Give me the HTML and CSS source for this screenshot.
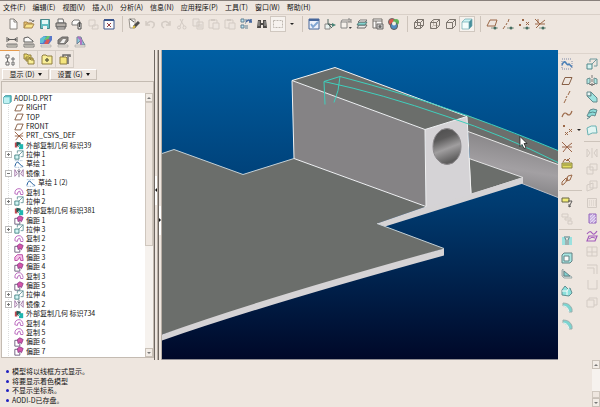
FILE: index.html
```
<!DOCTYPE html>
<html lang="zh-CN">
<head>
  <meta charset="UTF-8">
  <meta name="viewport" content="width=device-width, initial-scale=1.0">
  <title>AODI-D.PRT</title>
  <link rel="stylesheet" href="styles.css">
</head>
<body>

  <!-- Icon set -->
  <svg class="icon-set" aria-hidden="true">
    <symbol id="i-new" viewBox="0 0 12 12"><path d="M3 1h4l3 3v7H3z" fill="#fff" stroke="#77726d"/><path d="M7 1v3h3" fill="none" stroke="#77726d"/></symbol>
    <symbol id="i-open" viewBox="0 0 12 12"><path d="M1 10V4h3l1 1h4v2" fill="#e9bc58" stroke="#9a7430"/><path d="M1 10l2-4h8l-2 4z" fill="#fbe47c" stroke="#9a7430"/><path d="M6 2q3-1 4 2l1-2" fill="none" stroke="#555"/></symbol>
    <symbol id="i-save" viewBox="0 0 12 12"><path d="M1.500 1.500h9v9h-9z" fill="#4cb8bc" stroke="#2e767a"/><path d="M3 2h6v4H3z" fill="#e4fbfa"/><path d="M4 8h4v3H4z" fill="#f5f5f5"/></symbol>
    <symbol id="i-print" viewBox="0 0 12 12"><path d="M3 1h5l1 4H3z" fill="#fff" stroke="#555"/><path d="M1 5h10v4H1z" fill="#aaa59f" stroke="#444"/><path d="M2 9h8v2H2z" fill="#ded9d4" stroke="#555"/></symbol>
    <symbol id="i-mail" viewBox="0 0 12 12"><path d="M1 4l2-2h5l1 2v3H1z" fill="#fff" stroke="#666"/><path d="M7 5h3v6H7z" fill="#eee" stroke="#333"/><path d="M8.500 4v5" stroke="#333"/></symbol>
    <symbol id="i-erase" viewBox="0 0 12 12"><path d="M2 2h6v6H2zM6 7h5v4H5z" fill="none" stroke="#cfc7c0"/></symbol>
    <symbol id="i-close" viewBox="0 0 12 12"><path d="M1 2h10v9H1z" fill="#fff" stroke="#1d3d7e"/><path d="M1 1h10v2H1z" fill="#1d3d7e"/><path d="M4 5l4 4m0-4L4 9" stroke="#882028"/></symbol>
    <symbol id="i-pen" viewBox="0 0 12 12"><path d="M1 1h6v9H2z" fill="#fff" stroke="#8b867f"/><path d="M2 1l4 3" stroke="#333"/><path d="M11 4L6 9" stroke="#333" stroke-width="3"/><path d="M5 10l2-2" stroke="#d6b62e" stroke-width="2"/></symbol>
    <symbol id="i-undo" viewBox="0 0 12 12"><path d="M2 3v4h4M2 7q4-6 8-2 1 3-2 5" fill="none" stroke="#cfc7c0" stroke-width="1.500"/></symbol>
    <symbol id="i-redo" viewBox="0 0 12 12"><path d="M10 3v4H6M10 7Q6 1 2 5q-1 3 2 5" fill="none" stroke="#cfc7c0" stroke-width="1.500"/></symbol>
    <symbol id="i-cut" viewBox="0 0 12 12"><path d="M4 1l4 7M7 1L4 8" stroke="#cfc7c0"/><circle cx="3" cy="9.500" r="1.500" fill="none" stroke="#cfc7c0"/><circle cx="8.500" cy="9.500" r="1.500" fill="none" stroke="#cfc7c0"/></symbol>
    <symbol id="i-copy" viewBox="0 0 12 12"><path d="M1 1h6v7H1zM5 4h6v7H5z" fill="#ece5df" stroke="#cfc7c0"/><path d="M6 7h4M6 9h4" stroke="#cfc7c0"/></symbol>
    <symbol id="i-paste" viewBox="0 0 12 12"><path d="M1 2h8v8H1z" fill="none" stroke="#cfc7c0"/><path d="M3 1h4v2H3z" fill="#cfc7c0"/><path d="M5 5h6v6H5z" fill="#ece5df" stroke="#cfc7c0"/></symbol>
    <symbol id="i-regen" viewBox="0 0 12 12"><path d="M1 1h3v3H1zM1 7h3v3H1z" fill="#b9e6f4" stroke="#496f86"/><path d="M5 2h2M5 5h1M5 8h3M5 10h3" stroke="#496f86"/><path d="M6 4q3-4 5 0M9 4h3M11 1v3" fill="none" stroke="#2a5394" stroke-width="1.500"/></symbol>
    <symbol id="i-find" viewBox="0 0 12 12"><path d="M2 2h3v3h2V2h3l1 8H7V7H5v3H1z" fill="#302e2c"/><path d="M3 3v5M9 3v5" stroke="#aaa"/></symbol>
    <symbol id="i-box" viewBox="0 0 12 12"><path d="M1.500 2.500h9v7h-9z" fill="none" stroke="#b3aca5" stroke-dasharray="2 1"/></symbol>
    <symbol id="i-repaint" viewBox="0 0 12 12"><path d="M1 1h10v10H1z" fill="#eef4ff" stroke="#2a5290"/><path d="M1 1h10v2H1z" fill="#2a5290"/><path d="M3 6l2 3 5-5" fill="none" stroke="#6f9bd2" stroke-width="2"/></symbol>
    <symbol id="i-spin" viewBox="0 0 12 12"><path d="M1 6h5v5H1z" fill="#e9f5f3" stroke="#777"/><path d="M4 1v5l6 1M4 6l4 4" fill="none" stroke="#34524c"/><path d="M8 5l4 2-4 2z" fill="#2c7264"/></symbol>
    <symbol id="i-orient" viewBox="0 0 12 12"><path d="M1 4h6v6H1zM1 4l1-2h5" fill="#f8f4ee" stroke="#777"/><path d="M8 1h2v3H8zM11 1v4" fill="none" stroke="#777"/><path d="M9 9h3l-2 2z" fill="#222"/></symbol>
    <symbol id="i-layer" viewBox="0 0 12 12"><path d="M1 10l2-3h8l-2 3z" fill="#eee" stroke="#555"/><path d="M1 7l2-3h8L9 7z" fill="#70d3cf" stroke="#3a6664"/><path d="M2 4l2-2h7L9 4z" fill="#fff" stroke="#666"/></symbol>
    <symbol id="i-view" viewBox="0 0 12 12"><path d="M1 1h9v9H1zM1 3h9M4 3v7" fill="#fff" stroke="#605c58"/><path d="M5 6h6v5H5z" fill="#ccc" stroke="#555"/><circle cx="8" cy="8.500" r="1.500" fill="#555"/></symbol>
    <symbol id="i-color" viewBox="0 0 12 12"><circle cx="4" cy="4" r="3.500" fill="#d84236" stroke="#555"/><circle cx="8" cy="4" r="3" fill="#45aa45"/><circle cx="6" cy="8" r="3.500" fill="#347fc0" stroke="#444"/><circle cx="6" cy="5.500" r="2" fill="#f3f3e8"/></symbol>
    <symbol id="i-wire" viewBox="0 0 12 12"><path d="M1.500 4.500h6v6h-6zM4.500 1.500h6v6h-6zM1.500 4.500l3-3M7.500 4.500l3-3M7.500 10.500l3-3M1.500 10.500l3-3" fill="none" stroke="#69625b"/></symbol>
    <symbol id="i-hidden" viewBox="0 0 12 12"><path d="M4.500 2v5.500H10M1.500 10.500l3-3" fill="none" stroke="#bbb3aa"/><path d="M1.500 4.500h6v6h-6zM1.500 4.500l3-3h6v6l-3 3M7.500 4.500l3-3" fill="none" stroke="#69625b"/></symbol>
    <symbol id="i-nohide" viewBox="0 0 12 12"><path d="M1.500 4.500h6v6h-6zM1.500 4.500l3-3h6v6l-3 3M7.500 4.500l3-3" fill="none" stroke="#69625b"/></symbol>
    <symbol id="i-shade" viewBox="0 0 12 12"><path d="M1 4l3-3h7L8 4z" fill="#c6f2f3"/><path d="M8 4l3-3v7l-3 3z" fill="#297d8d"/><path d="M1 4h7v7H1z" fill="#f4ffff"/><path d="M1 4l3-3h7v7l-3 3H1zM1 4h7v7M8 4l3-3" fill="none" stroke="#569da6" stroke-width=".7"/></symbol>
    <symbol id="i-eyeplane" viewBox="0 0 12 12"><path d="M1 8l3-6h7L9 8z" fill="none" stroke="#8d532e"/><path d="M5 9h7v2H5z" fill="#b4bbae"/><circle cx="9" cy="10" r="1.500" fill="#28584c"/></symbol>
    <symbol id="i-eyeaxis" viewBox="0 0 12 12"><path d="M1 11l2-3M4 7l1-2M6 4l1-3" stroke="#8d532e"/><path d="M5 9h7v2H5z" fill="#b4bbae"/><circle cx="9" cy="10" r="1.500" fill="#28584c"/></symbol>
    <symbol id="i-eyepoint" viewBox="0 0 12 12"><path d="M1 6l2 2m0-2L1 8M4 1l2 2m0-2L4 3M8 4l3 3m0-3L8 7" stroke="#8d532e"/><path d="M5 9h7v2H5z" fill="#b4bbae"/><circle cx="9" cy="10" r="1.500" fill="#28584c"/></symbol>
    <symbol id="i-eyecsys" viewBox="0 0 12 12"><path d="M1 1l5 5 5-4M6 6L2 10M4 1v4M1 6h10" fill="none" stroke="#8d532e"/><path d="M5 9h7v2H5z" fill="#b4bbae"/><circle cx="9" cy="10" r="1.500" fill="#28584c"/></symbol>
    <symbol id="i-dist" viewBox="0 0 12 12"><path d="M1 1v5M11 1v5M2 3.500h8M3 2L2 3.500 3 5M9 2l1 1.500L9 5" fill="none" stroke="#444"/><path d="M1 8h10v3H1z" fill="#f4efdf" stroke="#666"/><path d="M3 8v2M5 8v2M7 8v2M9 8v2" stroke="#666"/></symbol>
    <symbol id="i-area" viewBox="0 0 12 12"><path d="M1 6V2l4-1 5 4v1z" fill="#fff" stroke="#444"/><path d="M1 8h10v3H1z" fill="#f4efdf" stroke="#666"/><path d="M3 8v2M5 8v2M7 8v2M9 8v2" stroke="#666"/></symbol>
    <symbol id="i-curv" viewBox="0 0 12 12"><path d="M0 8V3l4-3h8v4L9 8z" fill="#3d64c6"/><path d="M0 7V3l4-3 2 1-3 6z" fill="#45b9d6"/><path d="M4 4l3-4h3L8 4z" fill="#4fc25d"/><path d="M4 8l3-5 3 1-2 4z" fill="#d64040"/><path d="M1 9h10v2H1z" fill="#e8e2d8" stroke="#888" stroke-width=".5"/></symbol>
    <symbol id="i-sect" viewBox="0 0 12 12"><path d="M1 8V4l4-3h6v4L8 8z" fill="#77736f" stroke="#555"/><path d="M3 7l3-4h3L7 7z" fill="#f1f1f1"/><path d="M1 9h10v2H1z" fill="#e8e2d8" stroke="#888" stroke-width=".5"/></symbol>
    <symbol id="i-draft" viewBox="0 0 12 12"><path d="M3 1h4l1 3 3 5H7L6 5 3 8z" fill="#79c6da" stroke="#5b6f86"/><path d="M4 1q4 2 3 8" fill="none" stroke="#a65fc0" stroke-width="2"/><path d="M1 9h10v2H1z" fill="#e8e2d8" stroke="#888" stroke-width=".5"/></symbol>
    <symbol id="i-treetab" viewBox="0 0 12 12"><path d="M2 1h3v3H2zM2 8h3v3H2zM3.500 4v4" fill="none" stroke="#555"/><path d="M8 4h2v2H8zM8 8h2v3H8z" fill="#fff" stroke="#555"/></symbol>
    <symbol id="i-folders" viewBox="0 0 12 12"><path d="M1 1h3l1 1h3v4H1zM3 4h3l1 1h3v3H3z" fill="#ead958" stroke="#806d25"/><path d="M5 6h2l1 1h3v4H5z" fill="#fbf18c" stroke="#806d25"/></symbol>
    <symbol id="i-fav" viewBox="0 0 12 12"><path d="M1 3l1-1h3l1 1h5v8H1z" fill="#fbf18c" stroke="#806d25"/><path d="M6 5v4M4 7h4" stroke="#57552b" stroke-width="1.500"/></symbol>
    <symbol id="i-tools" viewBox="0 0 12 12"><path d="M1 4h6l1 1v6H1z" fill="#f6e56e" stroke="#806d25"/><path d="M4 4V2h7v2M9 2v9" fill="none" stroke="#555" stroke-width="1.500"/></symbol>

    <!-- Model tree -->
    <symbol id="i-part" viewBox="0 0 12 12"><path d="M2 4l2-2h7v7l-2 2H2z" fill="#65c9ce" stroke="#2c8990"/><path d="M2 4h7v7H2z" fill="#bff1f2"/></symbol>
    <symbol id="i-plane" viewBox="0 0 12 12"><path d="M1 9.500l3-7h7l-3 7z" fill="none" stroke="#77492c"/></symbol>
    <symbol id="i-csys" viewBox="0 0 12 12"><path d="M1 1l5 5 5-4M6 6l-4 5M6 6l5 5M1 6h10" fill="none" stroke="#8d4f30"/></symbol>
    <symbol id="i-ext" viewBox="0 0 12 12"><path d="M1 3h3v6H1z" fill="#c04a52"/><path d="M3 2l5 1v6L3 7z" fill="#245c58"/><path d="M6 5h5v6H6z" fill="#20b7b0"/><path d="M5 6l2 2" stroke="#fff"/></symbol>
    <symbol id="i-extrude" viewBox="0 0 12 12"><path d="M1 6h5v5H1z" fill="#d3f5f4" stroke="#37787c"/><path d="M4 4V1h7v7H8M6 6l5-5" fill="none" stroke="#5d8f94"/></symbol>
    <symbol id="i-sketch" viewBox="0 0 12 12"><path d="M1 2h10M1 10h10" stroke="#7fa3c7" stroke-dasharray="1 1"/><path d="M1 9q2-8 5-4t5 4" fill="none" stroke="#25609d" stroke-width="1.200"/></symbol>
    <symbol id="i-mirror" viewBox="0 0 12 12"><path d="M1 2v8l3-3zM11 2v8L8 7z" fill="none" stroke="#99679f"/><path d="M6 1v10M4 3l2 2 2-2" fill="none" stroke="#635a74"/></symbol>
    <symbol id="i-surf" viewBox="0 0 12 12"><path d="M1 8q0-6 5-6 4 0 5 6M1 8l3 1q0-4 3-4l1 4h3" fill="none" stroke="#b052b4"/></symbol>
    <symbol id="i-offset" viewBox="0 0 12 12"><path d="M1 4h6v7H1z" fill="#fff" stroke="#5d4b6d"/><path d="M4 3l3-2 4 2-2 5-2-2-2 2z" fill="#d556a9" stroke="#8e3c8c"/></symbol>
    <symbol id="i-offset2" viewBox="0 0 12 12"><path d="M1 9V5l3-3h6l1 7H8L7 5 4 9z" fill="#f4c3e9" stroke="#b5369b"/></symbol>

    <!-- Feature bars -->
    <symbol id="i-sketchbar" viewBox="0 0 12 12"><path d="M1 1h10M1 11h10M1 3v7M11 3v7" stroke="#6d7ba0" stroke-dasharray="1 1"/><path d="M1 7q2-5 4-2t3 1l3 3" fill="none" stroke="#2c6cae" stroke-width="1.500"/></symbol>
    <symbol id="i-axis" viewBox="0 0 12 12"><path d="M3 12l2-4M5 7l1-2M7 4l2-4" stroke="#8d532e"/></symbol>
    <symbol id="i-curve" viewBox="0 0 12 12"><path d="M1 9q2-6 5-3t5-3" fill="none" stroke="#8d532e" stroke-width="1.200"/></symbol>
    <symbol id="i-points" viewBox="0 0 12 12"><path d="M2 1l2 2m0-2L2 3M4 8l3 3m0-3l-3 3M8 5l3 3m0-3L8 8" stroke="#8d532e"/></symbol>
    <symbol id="i-analysis" viewBox="0 0 12 12"><path d="M2 5l2-3 2 2 3-3M6 2l3 3" fill="none" stroke="#8d532e"/><path d="M1 6h10v5H1z" fill="#e0dc48" stroke="#777027"/><path d="M3 7v2M5 7v2M7 7v2M9 7v2" stroke="#777027"/></symbol>
    <symbol id="i-ref" viewBox="0 0 12 12"><path d="M1 11V8l4-4 2 1-4 5zM5 7l2-5 4-1-2 5z" fill="none" stroke="#8d532e"/></symbol>
    <symbol id="i-note" viewBox="0 0 12 12"><path d="M1 2h7v4H1z" fill="#f5ef68" stroke="#555028"/><path d="M7 5h4l-3 6M8 8v3l2-1" fill="none" stroke="#444"/></symbol>
    <symbol id="i-graygroup" viewBox="0 0 12 12"><path d="M1 1h6v3H1zM4 5h6v2H4zM7 8h4v3H7z" fill="none" stroke="#cfc7c0"/></symbol>
    <symbol id="i-hole" viewBox="0 0 12 12"><path d="M1 2h3v8H1zM8 2h3v8H8z" fill="#8de1df"/><path d="M3 2h6M4 3l1 2v5M8 3L7 5v5" fill="none" stroke="#326d76"/></symbol>
    <symbol id="i-shell" viewBox="0 0 12 12"><path d="M1 3l2-2h8v8l-2 2H1z" fill="#9be6e3" stroke="#4a7074"/><path d="M3 4h5v5H3z" fill="#fff" stroke="#4a7074"/></symbol>
    <symbol id="i-rib" viewBox="0 0 12 12"><path d="M2 1v7h8l1 2H3L1 8V2z" fill="#dcecea" stroke="#8f9fa0"/><path d="M3 3l6 5H3z" fill="#6fd0d1" stroke="#4a7074"/></symbol>
    <symbol id="i-taper" viewBox="0 0 12 12"><path d="M1 10V5l3-4 3 3 2-1 2 5-3 3z" fill="#7be0dc" stroke="#4a8084"/><path d="M1 6h5v4M6 6l2-3" fill="none" stroke="#fff"/></symbol>
    <symbol id="i-round" viewBox="0 0 12 12"><path d="M2 2q7 0 9 6v3H8Q8 6 2 5z" fill="#67d3cf" stroke="#8ba6a5"/><path d="M2 5q5 0 6 6" fill="none" stroke="#e9ffff"/></symbol>
    <symbol id="i-revolve" viewBox="0 0 12 12"><path d="M6 0v12" stroke="#666" stroke-dasharray="3 1"/><path d="M1 4l3-1v5L1 9zM8 3l3 1v5L8 8z" fill="#a5e8e4" stroke="#568083"/><path d="M3 9q3 2 6 0" fill="none" stroke="#555"/></symbol>
    <symbol id="i-sweep" viewBox="0 0 12 12"><path d="M1 1h4v4H1z" fill="#e6fbfa" stroke="#4d7a7f"/><path d="M5 1l6 6v4H7L1 5h4z" fill="#91e3e1" stroke="#4d7a7f"/></symbol>
    <symbol id="i-blend" viewBox="0 0 12 12"><path d="M1 8l3-6q3-2 7 0L9 8q-4-2-5 1z" fill="#7bdbd8" stroke="#4d7a7f"/><path d="M3 5q4-2 7 0M1 11l3-2" fill="none" stroke="#3c777c"/></symbol>
    <symbol id="i-style" viewBox="0 0 12 12"><path d="M1 4q4-3 9-2l1 7q-5-1-9 2z" fill="#dff8f6" stroke="#54a9ac"/></symbol>
    <symbol id="i-gmirror" viewBox="0 0 12 12"><path d="M1 2v8l3-4zM11 2v8L8 6zM6 1v10" fill="none" stroke="#cfc7c0"/></symbol>
    <symbol id="i-gmerge" viewBox="0 0 12 12"><path d="M1 4h6v7H1zM4 1h7v6H4z" fill="none" stroke="#cfc7c0"/></symbol>
    <symbol id="i-gtrim" viewBox="0 0 12 12"><path d="M1 5l6-2v6l-6 2zM4 1h7v7H4z" fill="none" stroke="#cfc7c0"/></symbol>
    <symbol id="i-ggrid" viewBox="0 0 12 12"><path d="M1.500 1.500h9v9h-9z" fill="none" stroke="#cfc7c0"/><path d="M3 4h7M3 6h7M3 8h7" stroke="#cfc7c0" stroke-dasharray="1 1"/></symbol>
    <symbol id="i-fill" viewBox="0 0 12 12"><path d="M3 1h7v9H3z" fill="#c8b0e8" stroke="#8752b7"/><path d="M4 4l3-3M4 7l5-5M4 10l6-6M7 10l3-3" stroke="#f3eafa" stroke-width=".7"/></symbol>
    <symbol id="i-warp" viewBox="0 0 12 12"><path d="M1 4q3-4 5-1t5-2M3 6h8l-2 5H1z" fill="none" stroke="#9643b5" stroke-width="1.200"/><path d="M3 9q3-3 6-1" fill="none" stroke="#9643b5"/></symbol>
    <symbol id="i-gsplit" viewBox="0 0 12 12"><path d="M1 1h10v9H1zM6 1v9M1 6h10" fill="none" stroke="#cfc7c0"/></symbol>
    <symbol id="i-gcorner" viewBox="0 0 12 12"><path d="M1 2h10v9M1 5h7v6" fill="none" stroke="#cfc7c0"/></symbol>
    <symbol id="i-gedge" viewBox="0 0 12 12"><path d="M2 1v9h9V1" fill="none" stroke="#cfc7c0"/></symbol>
    <symbol id="i-gsolid" viewBox="0 0 12 12"><path d="M1 4h7v7H1zM3 4V2h8v7H8" fill="none" stroke="#cfc7c0"/></symbol>
  </svg>

  <nav class="menubar">
    <button>文件(F)</button>
    <button>编辑(E)</button>
    <button>视图(V)</button>
    <button>插入(I)</button>
    <button>分析(A)</button>
    <button>信息(N)</button>
    <button>应用程序(P)</button>
    <button>工具(T)</button>
    <button>窗口(W)</button>
    <button>帮助(H)</button>
  </nav>

  <div class="toolbar">
    <div class="group">
      <button class="tool" aria-label="新建"><svg><use href="#i-new"/></svg></button>
      <button class="tool" aria-label="打开"><svg><use href="#i-open"/></svg></button>
      <button class="tool" aria-label="保存"><svg><use href="#i-save"/></svg></button>
      <button class="tool" aria-label="打印"><svg><use href="#i-print"/></svg></button>
      <button class="tool" aria-label="发送"><svg><use href="#i-mail"/></svg></button>
      <button class="tool" aria-label="拭除" disabled><svg><use href="#i-erase"/></svg></button>
      <button class="tool" aria-label="关闭"><svg><use href="#i-close"/></svg></button>
    </div>
    <div class="group">
      <button class="tool" aria-label="编辑"><svg><use href="#i-pen"/></svg></button>
      <button class="tool" aria-label="撤消" disabled><svg><use href="#i-undo"/></svg></button>
      <button class="tool" aria-label="重做" disabled><svg><use href="#i-redo"/></svg></button>
      <button class="tool" aria-label="剪切" disabled><svg><use href="#i-cut"/></svg></button>
      <button class="tool" aria-label="复制" disabled><svg><use href="#i-copy"/></svg></button>
      <button class="tool" aria-label="粘贴" disabled><svg><use href="#i-paste"/></svg></button>
      <button class="tool" aria-label="选择性粘贴" disabled><svg><use href="#i-paste"/></svg></button>
      <button class="tool" aria-label="再生"><svg><use href="#i-regen"/></svg></button>
      <button class="tool" aria-label="查找"><svg><use href="#i-find"/></svg></button>
      <button class="tool framed" aria-label="选取框"><svg><use href="#i-box"/></svg></button>
      <button class="drop" aria-label="选取选项"></button>
    </div>
    <div class="group">
      <button class="tool" aria-label="重画"><svg><use href="#i-repaint"/></svg></button>
      <button class="tool" aria-label="旋转中心"><svg><use href="#i-spin"/></svg></button>
      <button class="tool" aria-label="定向"><svg><use href="#i-orient"/></svg></button>
      <button class="tool" aria-label="层"><svg><use href="#i-layer"/></svg></button>
      <button class="tool" aria-label="视图管理器"><svg><use href="#i-view"/></svg></button>
      <button class="tool" aria-label="外观"><svg><use href="#i-color"/></svg></button>
    </div>
    <div class="group">
      <button class="tool" aria-label="线框"><svg><use href="#i-wire"/></svg></button>
      <button class="tool" aria-label="隐藏线"><svg><use href="#i-hidden"/></svg></button>
      <button class="tool" aria-label="无隐藏线"><svg><use href="#i-nohide"/></svg></button>
      <button class="tool framed" aria-label="着色"><svg><use href="#i-shade"/></svg></button>
    </div>
    <div class="group">
      <button class="tool" aria-label="基准平面显示"><svg><use href="#i-eyeplane"/></svg></button>
      <button class="tool" aria-label="基准轴显示"><svg><use href="#i-eyeaxis"/></svg></button>
      <button class="tool" aria-label="基准点显示"><svg><use href="#i-eyepoint"/></svg></button>
      <button class="tool" aria-label="坐标系显示"><svg><use href="#i-eyecsys"/></svg></button>
    </div>
  </div>

  <div class="toolbar second">
    <button class="tool" aria-label="距离"><svg><use href="#i-dist"/></svg></button>
    <button class="tool" aria-label="面积"><svg><use href="#i-area"/></svg></button>
    <button class="tool" aria-label="曲率"><svg><use href="#i-curv"/></svg></button>
    <button class="tool" aria-label="截面"><svg><use href="#i-sect"/></svg></button>
    <button class="tool" aria-label="拔模"><svg><use href="#i-draft"/></svg></button>
  </div>

  <main class="workspace">
    <aside class="navigator">
      <div class="tabs">
        <button class="tab active" aria-label="模型树"><svg><use href="#i-treetab"/></svg></button>
        <button class="tab" aria-label="文件夹"><svg><use href="#i-folders"/></svg></button>
        <button class="tab" aria-label="收藏夹"><svg><use href="#i-fav"/></svg></button>
        <button class="tab" aria-label="连接"><svg><use href="#i-tools"/></svg></button>
      </div>
      <div class="options">
        <button>显示 (D) <span class="caret"></span></button>
        <button>设置 (G) <span class="caret"></span></button>
      </div>
      <div class="tree-panel">
        <ul class="tree">
          <li class="root"><svg><use href="#i-part"/></svg>AODI-D.PRT</li>
          <li><svg><use href="#i-plane"/></svg>RIGHT</li>
          <li><svg><use href="#i-plane"/></svg>TOP</li>
          <li><svg><use href="#i-plane"/></svg>FRONT</li>
          <li><svg><use href="#i-csys"/></svg>PRT_CSYS_DEF</li>
          <li><svg><use href="#i-ext"/></svg>外部复制几何 标识39</li>
          <li class="closed"><svg><use href="#i-extrude"/></svg>拉伸 1</li>
          <li><svg><use href="#i-sketch"/></svg>草绘 1</li>
          <li class="opened"><svg><use href="#i-mirror"/></svg>镜像 1</li>
          <li class="child"><svg><use href="#i-sketch"/></svg>草绘 1 (2)</li>
          <li><svg><use href="#i-surf"/></svg>复制 1</li>
          <li class="closed"><svg><use href="#i-extrude"/></svg>拉伸 2</li>
          <li><svg><use href="#i-ext"/></svg>外部复制几何 标识381</li>
          <li><svg><use href="#i-offset"/></svg>偏距 1</li>
          <li class="closed"><svg><use href="#i-extrude"/></svg>拉伸 3</li>
          <li><svg><use href="#i-surf"/></svg>复制 2</li>
          <li><svg><use href="#i-offset"/></svg>偏距 2</li>
          <li><svg><use href="#i-offset2"/></svg>偏距 3</li>
          <li><svg><use href="#i-offset"/></svg>偏距 4</li>
          <li><svg><use href="#i-surf"/></svg>复制 3</li>
          <li><svg><use href="#i-offset"/></svg>偏距 5</li>
          <li class="closed"><svg><use href="#i-extrude"/></svg>拉伸 4</li>
          <li class="closed"><svg><use href="#i-mirror"/></svg>镜像 2</li>
          <li><svg><use href="#i-ext"/></svg>外部复制几何 标识734</li>
          <li><svg><use href="#i-surf"/></svg>复制 4</li>
          <li><svg><use href="#i-surf"/></svg>复制 5</li>
          <li><svg><use href="#i-offset"/></svg>偏距 6</li>
          <li><svg><use href="#i-offset"/></svg>偏距 7</li>
        </ul>
        <div class="scrollbar">
          <button class="up" aria-label="向上滚动"></button>
          <div class="thumb"></div>
          <div class="track"></div>
          <button class="down" aria-label="向下滚动"></button>
        </div>
      </div>
    </aside>

    <div class="splitter upper"><button class="left" aria-label="收起导航器"></button></div>
    <div class="splitter lower"><button class="right" aria-label="展开浏览器"></button></div>

    <!-- Shaded model -->
    <svg class="viewport" viewBox="162 50 396 310" preserveAspectRatio="xMidYMid slice">
      <defs>
        <linearGradient id="sky" x2="0" y2="1">
          <stop offset="0" stop-color="#005fa3"/>
          <stop offset=".5" stop-color="#003b70"/>
          <stop offset="1" stop-color="#000828"/>
        </linearGradient>
        <linearGradient id="bore" x1="0" y1="0" x2=".3" y2="1">
          <stop offset="0" stop-color="#4c4c4c"/>
          <stop offset=".35" stop-color="#5c5b5b"/>
          <stop offset=".65" stop-color="#a09e9f"/>
          <stop offset="1" stop-color="#5f5e5e"/>
        </linearGradient>
        <linearGradient id="rail" x1="0.3" y1="0" x2=".08" y2="1">
          <stop offset="0" stop-color="#858385"/>
          <stop offset=".5" stop-color="#a3a0a3"/>
          <stop offset="1" stop-color="#777678"/>
        </linearGradient>
      </defs>
      <rect x="162" y="50" width="396" height="310" fill="url(#sky)"/>
      <path d="M466 115l92 36v15l-90-33z" fill="#6c6e6c"/>
      <path d="M468 132l90 33v33l-36-14v-6l-52-18z" fill="url(#rail)"/>
      <path d="M468 132l90 33" stroke="#e9e9e9"/>
      <path d="M522 184l36 14" stroke="#b9bcc4"/>
      <path d="M469 159l54 19-52 17z" fill="#6b6e6b" stroke="#e4e4e4"/>
      <path d="M162 154l12-4 69 25 51-16 132 48-49 17 67 25-282 86z" fill="#6b6e6b"/>
      <path d="M162 154l12-4 69 25 51-16M377 224l67 25" fill="none" stroke="#c3d0d6"/>
      <path d="M162 335q100-36 282-86v7q-182 50-282 85z" fill="#d5d3d5"/>
      <path d="M377 224l49-17 45-13 52-16v6l-138 43z" fill="#d5d3d5"/>
      <path d="M292 81l133 49 1 77-132-48z" fill="#858385"/>
      <path d="M292 81l43-13 132 49-42 13z" fill="#6b6e6b"/>
      <path d="M425 130l42-13 4 78-45 13z" fill="#d5d3d6"/>
      <path d="M294 159l-2-78 43-13 132 49 4 77M292 81l133 49 42-13M425 130l1 77-132-48" fill="none" stroke="#f2f2f2"/>
      <ellipse cx="447" cy="147" rx="14" ry="18" fill="url(#bore)" stroke="#8c898c"/>
      <path d="M325 105l-1-23 16-5-2 14-4 12M324 82q57 12 123 35 55 18 111 46M340 77q62 16 127 39 50 18 91 35" fill="none" stroke="#3fd0bd"/>
      <path d="M520 137v10l2-2 2 4 2-1-2-4h3z" fill="#fff" stroke="#111" stroke-width=".7"/>
    </svg>

    <div class="feature-bars">
      <div class="bar datum-bar">
        <button class="tool" aria-label="草绘"><svg><use href="#i-sketchbar"/></svg></button>
        <button class="tool" aria-label="基准平面"><svg><use href="#i-plane"/></svg></button>
        <button class="tool" aria-label="基准轴"><svg><use href="#i-axis"/></svg></button>
        <button class="tool" aria-label="基准曲线"><svg><use href="#i-curve"/></svg></button>
        <div class="with-drop">
          <button class="tool" aria-label="基准点"><svg><use href="#i-points"/></svg></button>
          <button class="drop" aria-label="基准点选项"></button>
        </div>
        <button class="tool" aria-label="坐标系"><svg><use href="#i-csys"/></svg></button>
        <button class="tool" aria-label="分析特征"><svg><use href="#i-analysis"/></svg></button>
        <button class="tool" aria-label="参照"><svg><use href="#i-ref"/></svg></button>
        <hr>
        <button class="tool" aria-label="注释"><svg><use href="#i-note"/></svg></button>
        <button class="tool" aria-label="传播" disabled><svg><use href="#i-graygroup"/></svg></button>
        <hr>
        <button class="tool" aria-label="孔"><svg><use href="#i-hole"/></svg></button>
        <button class="tool" aria-label="壳"><svg><use href="#i-shell"/></svg></button>
        <button class="tool" aria-label="筋"><svg><use href="#i-rib"/></svg></button>
        <button class="tool" aria-label="斜度"><svg><use href="#i-taper"/></svg></button>
        <button class="tool" aria-label="倒圆角"><svg><use href="#i-round"/></svg></button>
        <button class="tool" aria-label="倒角"><svg><use href="#i-round"/></svg></button>
      </div>
      <div class="bar shape-bar">
        <button class="tool" aria-label="拉伸"><svg><use href="#i-extrude"/></svg></button>
        <button class="tool" aria-label="旋转"><svg><use href="#i-revolve"/></svg></button>
        <button class="tool" aria-label="扫描"><svg><use href="#i-sweep"/></svg></button>
        <button class="tool" aria-label="边界混合"><svg><use href="#i-blend"/></svg></button>
        <button class="tool" aria-label="造型"><svg><use href="#i-style"/></svg></button>
        <hr>
        <button class="tool" aria-label="镜像" disabled><svg><use href="#i-gmirror"/></svg></button>
        <button class="tool" aria-label="合并" disabled><svg><use href="#i-gmerge"/></svg></button>
        <button class="tool" aria-label="修剪" disabled><svg><use href="#i-gtrim"/></svg></button>
        <button class="tool" aria-label="阵列" disabled><svg><use href="#i-ggrid"/></svg></button>
        <button class="tool" aria-label="填充"><svg><use href="#i-fill"/></svg></button>
        <button class="tool" aria-label="扭曲"><svg><use href="#i-warp"/></svg></button>
        <button class="tool" aria-label="分割" disabled><svg><use href="#i-gsplit"/></svg></button>
        <button class="tool" aria-label="偏移" disabled><svg><use href="#i-gcorner"/></svg></button>
        <button class="tool" aria-label="延伸" disabled><svg><use href="#i-gedge"/></svg></button>
        <button class="tool" aria-label="实体化" disabled><svg><use href="#i-gsolid"/></svg></button>
      </div>
    </div>
  </main>

  <footer class="messages">
    <ul>
      <li>模型将以线框方式显示。</li>
      <li>将要显示着色模型</li>
      <li>不显示坐标系。</li>
      <li>AODI-D已存盘。</li>
    </ul>
    <div class="scrollbar">
      <button class="up" aria-label="向上滚动"></button>
      <div class="track"></div>
      <div class="thumb"></div>
      <button class="down" aria-label="向下滚动"></button>
    </div>
  </footer>

</body>
</html>
```
FILE: styles.css
```
*,
*::before {
  box-sizing: border-box;
}

body {
  margin: 0;
  height: 100vh;
  display: flex;
  flex-direction: column;
  overflow: hidden;
  background-color: #eee6df;
  border-top: 1px solid #88807b;
  font-family: "Liberation Sans Narrow", "Noto Sans CJK SC", sans-serif;
  font-size: 7px;
  line-height: 9px;
  color: #111;
}

button {
  margin: 0;
  padding: 0;
  border: none;
  background: none;
  font: inherit;
  color: inherit;
}

ul {
  margin: 0;
  padding: 0;
  list-style: none;
}

.icon-set {
  display: none;
}

/* Menu bar */
.menubar {
  display: flex;
  gap: 7px;
  height: 14px;
  padding: 0 3px;
  border-bottom: 1px solid #d9d0c8;
}

/* Toolbars */
.toolbar {
  display: flex;
  align-items: center;
  height: 18px;
  padding-left: 5px;
}

.toolbar.second {
  height: 17px;
  padding-left: 4px;
  gap: 1px;
}

.group {
  display: flex;
  align-items: center;
  padding-right: 5px;
}

.group + .group {
  border-left: 1px solid #cdc4bb;
  padding-left: 3px;
}

.tool {
  width: 16px;
  height: 16px;
  display: flex;
  align-items: center;
  justify-content: center;
}

.tool svg,
.tab svg {
  width: 12px;
  height: 12px;
  opacity: 0.85;
}

.framed {
  background-color: #f6f2ee;
  border: 1px solid #d0c8c0;
}

.drop {
  width: 11px;
  height: 16px;
  display: flex;
  align-items: center;
  justify-content: center;
}

.drop::before {
  content: "";
  border: 2px solid transparent;
  border-top-color: #222;
  border-bottom: none;
}

/* Work area */
.workspace {
  flex: 1;
  min-height: 0;
  display: flex;
}

.navigator {
  width: 154px;
  display: flex;
  flex-direction: column;
}

.tabs {
  display: flex;
  height: 18px;
}

.tab {
  width: 18px;
  display: flex;
  align-items: center;
  justify-content: center;
  border: 1px solid #d6cec6;
  border-left: none;
}

.tab.active {
  width: 20px;
  background-color: #f8f5f2;
  border-top: 1px solid #e59a4c;
  border-bottom: none;
}

.options {
  display: flex;
  gap: 1px;
  padding: 1px 2px;
}

.options button {
  width: 47px;
  height: 11px;
  display: flex;
  align-items: center;
  justify-content: center;
  gap: 3px;
  border: 1px solid #cbc2b9;
  border-top-color: #fff;
  border-left-color: #fff;
}

.caret {
  border: 2px solid transparent;
  border-top: 3px solid #111;
  border-bottom: none;
}

/* Model tree */
.tree-panel {
  flex: 1;
  min-height: 0;
  display: flex;
  margin: 0 0 2px 1px;
  padding-top: 11px;
  border: 1px solid #c4bbb2;
}

.tree {
  flex: 1;
  display: grid;
  grid-auto-rows: 1fr;
  padding: 1px 0;
  background: #fff repeating-linear-gradient(#ddd 0 1px, #fff 1px 2px) no-repeat 6px 12px / 1px 100%;
}

.tree li {
  display: flex;
  align-items: center;
  gap: 2px;
  min-height: 0;
  height: 9px;
  padding-left: 12px;
  white-space: nowrap;
}

.tree li svg {
  width: 10px;
  height: 10px;
}

.tree .root {
  padding-left: 0;
}

.tree .child {
  padding-left: 24px;
}

.tree .closed,
.tree .opened {
  padding-left: 3px;
}

.tree .closed::before,
.tree .opened::before {
  content: "";
  width: 7px;
  height: 7px;
  border: 1px solid #bbb;
  background: #fff linear-gradient(#777, #777) no-repeat center / 3px 1px;
}

.tree .closed::before {
  background: linear-gradient(#777, #777) no-repeat center / 3px 1px,
    linear-gradient(#777, #777) no-repeat center / 1px 3px, #fff;
}

/* Scrollbars */
.scrollbar {
  width: 8px;
  display: flex;
  flex-direction: column;
  background-color: #f6f2ee;
}

.scrollbar button {
  height: 9px;
  display: flex;
  align-items: center;
  justify-content: center;
  border: 1px solid #c9c1b8;
  background-color: #f2ece6;
}

.scrollbar button::before {
  content: "";
  border: 2px solid transparent;
}

.scrollbar .up::before {
  border-bottom-color: #777;
  border-top: none;
}

.scrollbar .down::before {
  border-top-color: #777;
  border-bottom: none;
}

.thumb {
  flex: 7;
  border: 1px solid #cfc7be;
  background-color: #eee6df;
}

.track {
  flex: 5;
}

/* Splitters between the panes */
.splitter {
  width: 4px;
  display: flex;
  align-items: center;
  border-left: 1px solid #6f6862;
  border-right: 1px solid #b8afa6;
}

.splitter.upper {
  padding-bottom: 30px;
}

.splitter.lower {
  padding-top: 30px;
}

.splitter button {
  width: 2px;
  height: 29px;
  background-color: #fff;
}

.splitter button::before {
  content: "";
  display: block;
  border: 2px solid transparent;
}

.splitter .left::before {
  border-right-color: #111;
  border-left: none;
}

.splitter .right::before {
  border-left-color: #111;
  border-right: none;
}

/* 3D view */
.viewport {
  flex: 1;
  min-width: 0;
  height: 100%;
  border-bottom: 1px solid #918f94;
}

/* Feature toolbars on the right */
.feature-bars {
  display: flex;
  margin-top: 3px;
  border-top: 1px solid #ddd4cc;
}

.bar {
  display: flex;
  flex-direction: column;
  padding-top: 2px;
}

.bar .tool,
.with-drop {
  flex: 1;
  min-height: 0;
}

.with-drop {
  display: flex;
}

.with-drop .tool {
  flex: none;
  height: 100%;
}

.with-drop .drop {
  width: 7px;
}

.bar hr {
  width: 100%;
  margin: 2px 0 3px;
  border: none;
  border-top: 1px solid #cdc4bb;
}

.datum-bar {
  width: 24px;
  padding-left: 1px;
  padding-bottom: 28px;
}

.shape-bar {
  width: 18px;
  padding-left: 2px;
  padding-bottom: 50px;
}

/* Message area */
.messages {
  height: 47px;
  display: flex;
  justify-content: space-between;
}

.messages ul {
  display: grid;
  grid-auto-rows: 1fr;
  padding: 7px 0 2px 6px;
}

.messages li {
  display: flex;
  align-items: center;
  gap: 3px;
}

.messages li::before {
  content: "";
  width: 3px;
  height: 3px;
  border-radius: 50%;
  background-color: #2020c0;
}

.messages .track {
  flex: 4;
}

.messages .thumb {
  flex: 1;
}
```
